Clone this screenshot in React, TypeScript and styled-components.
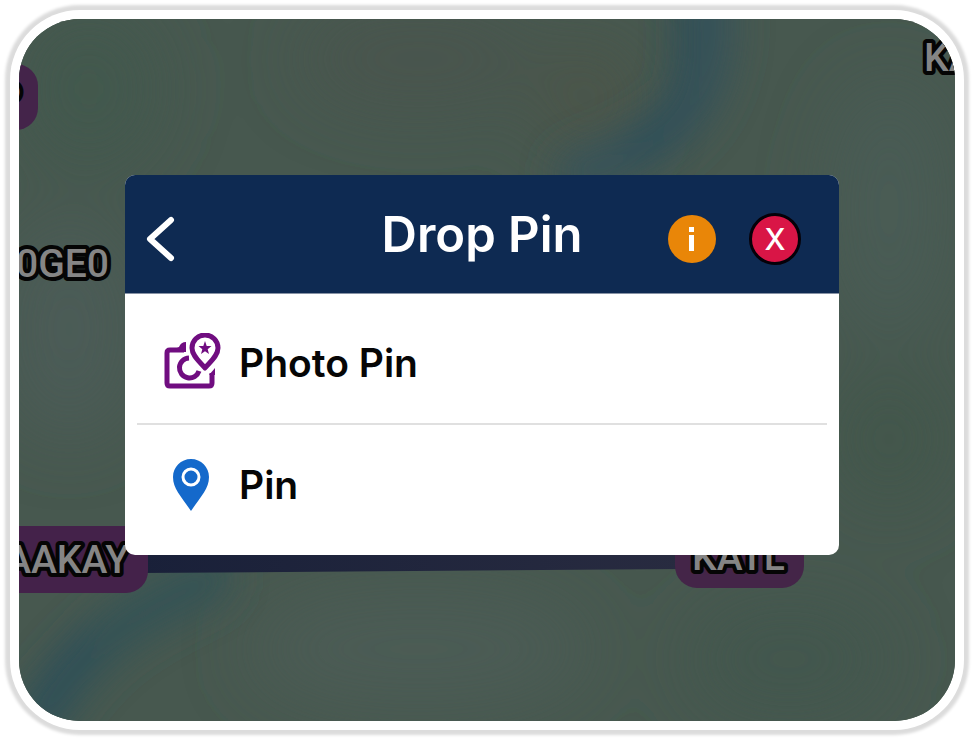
import React from "react";
import styled, { createGlobalStyle } from "styled-components";

const GlobalStyle = createGlobalStyle`
  *, *::before, *::after { box-sizing: border-box; }
  body { margin: 0; background: #ffffff; font-family: Inter, "Open Sans", sans-serif; }
`;

const Page = styled.div`
  display: flex;
  min-height: 100vh;
  padding: 10px;
`;

const Frame = styled.main`
  flex: 1;
  display: flex;
  padding: 9px;
  border-radius: 70px;
  background: #ffffff;
  box-shadow: 0 0 3px 5px #dcdcdc;
`;

const MapArea = styled.div`
  position: relative;
  flex: 1;
  display: flex;
  align-items: flex-start;
  padding: 156px 116px 165px 106px;
  border-radius: 61px;
  background: #47584f;
  overflow: hidden;
`;

const Terrain = styled.svg`
  position: absolute;
  inset: 0;
  width: 100%;
  height: 100%;
`;

const MapLabel = styled.text`
  font: 500 39px Roboto, sans-serif;
  fill: #858585;
  stroke: #050505;
  stroke-width: 8px;
  stroke-linejoin: round;
  paint-order: stroke fill;
`;

const Dialog = styled.section`
  position: relative;
  flex: 1;
  min-width: 0;
  border-radius: 10px;
  background: #ffffff;
  overflow: hidden;
`;

const Header = styled.header`
  display: grid;
  grid-template-columns: 1fr auto 1fr;
  align-items: center;
  height: 119px;
  padding: 10px 38px 0 20px;
  background: #0e2a52;
  border-bottom: 1px solid #8792a5;
`;

const Title = styled.h1`
  margin: 0 0 8px 18px;
  font-size: 49px;
  font-weight: 600;
  line-height: 56px;
  color: #ffffff;
`;

const IconButton = styled.button`
  display: flex;
  padding: 0;
  border: 0;
  background: none;
  cursor: pointer;
`;

const Actions = styled.div`
  display: flex;
  align-items: center;
  justify-content: flex-end;
  gap: 33px;
`;

const RoundButton = styled(IconButton)<{ $fill: string; $outlined?: boolean }>`
  align-items: center;
  justify-content: center;
  width: ${(p) => (p.$outlined ? 52 : 48)}px;
  height: ${(p) => (p.$outlined ? 52 : 48)}px;
  border: ${(p) => (p.$outlined ? "3px solid #050008" : "0")};
  border-radius: 50%;
  background: ${(p) => p.$fill};
  color: #ffffff;
  font: 500 30px/32px Inter, sans-serif;
`;

const List = styled.ul`
  margin: 0;
  padding: 9px 12px 10px;
  list-style: none;
`;

const Item = styled.li`
  & + & { border-top: 2px solid #e0e0e0; }
`;

const Option = styled.button`
  display: grid;
  grid-template-columns: 60px 1fr;
  align-items: center;
  column-gap: 18px;
  width: 100%;
  height: 120px;
  padding: 0 24px;
  border: 0;
  background: none;
  color: #060606;
  font: 600 39px/48px Inter, sans-serif;
  text-align: left;
  cursor: pointer;

  & > svg { justify-self: center; }
`;

const BackIcon = () => (
  <svg width="32" height="48" viewBox="0 0 32 48" fill="none" stroke="#fff" strokeWidth="6" strokeLinecap="round" strokeLinejoin="round" aria-hidden="true">
    <path d="M26 5 L5 24 L26 43" />
  </svg>
);

const InfoIcon = () => (
  <svg width="48" height="48" viewBox="0 0 48 48" fill="#fff" aria-hidden="true">
    <rect x="21" y="12" width="5" height="5" />
    <rect x="21" y="20" width="5" height="16" />
  </svg>
);

const PhotoPinIcon = () => (
  <svg width="60" height="60" viewBox="0 0 60 60" fill="none" stroke="#700d80" strokeWidth="4" strokeLinejoin="round" aria-hidden="true">
    <path d="M23 17 H9 Q6 17 6 20 V50 Q6 53 9 53 H48 Q51 53 51 50 V40" strokeWidth="5" />
    <path d="M14 16 L18 14 Q20 9 25 9 V19 H14 Z" fill="#700d80" stroke="none" />
    <path d="M48 42 L54 35 V42 Z" fill="#700d80" stroke="none" />
    <path d="M28 25 A10 10 0 1 0 38 38" strokeWidth="5" />
    <path d="M44 35 C39 29 31 23 31 15 A13 13 0 0 1 57 15 C57 23 49 29 44 35 Z" strokeWidth="5" />
    <path d="M44 8 L45.700 12.900 L50.500 13 L46.700 16.200 L48 21 L44 18.200 L40 21 L41.300 16.200 L37.500 13 L42.300 12.900 Z" fill="#700d80" stroke="none" />
  </svg>
);

const PinIcon = () => (
  <svg width="36" height="54" viewBox="0 0 36 54" aria-hidden="true">
    <path d="M18 1 C8 1 0 9 0 19 C0 31 8 38 18 53 C28 38 36 31 36 19 C36 9 28 1 18 1 Z" fill="#1469cb" />
    <circle cx="18" cy="19" r="8" fill="none" stroke="#fff" strokeWidth="3" />
  </svg>
);

const MapDrawing = () => (
  <Terrain viewBox="0 0 936 702" preserveAspectRatio="xMinYMin slice">
    <defs>
      <filter id="soft" x="-50%" y="-50%" width="200%" height="200%">
        <feGaussianBlur stdDeviation="18" />
      </filter>
      <filter id="wide" x="-50%" y="-50%" width="200%" height="200%">
        <feGaussianBlur stdDeviation="35" />
      </filter>
      <linearGradient id="route" x1="0" x2="1">
        <stop offset="0" stopColor="#192039" />
        <stop offset="1" stopColor="#282b40" />
      </linearGradient>
    </defs>
    <rect width="936" height="702" fill="#47584f" />
    <g filter="url(#wide)">
      <ellipse cx="70" cy="70" rx="70" ry="80" fill="#43584e" />
      <ellipse cx="400" cy="40" rx="120" ry="50" fill="#48554d" />
      <ellipse cx="50" cy="310" rx="70" ry="110" fill="#4b5c56" />
      <ellipse cx="570" cy="80" rx="50" ry="60" fill="#4b5449" />
      <ellipse cx="870" cy="190" rx="60" ry="130" fill="#4a5b55" />
      <ellipse cx="870" cy="420" rx="60" ry="70" fill="#42564b" />
      <ellipse cx="400" cy="630" rx="170" ry="60" fill="#4b5b55" />
      <ellipse cx="770" cy="640" rx="100" ry="60" fill="#43574d" />
    </g>
    <g filter="url(#soft)" fill="none" strokeLinecap="round">
      <path d="M692 -20 C700 70 670 120 560 155" stroke="#375358" strokeWidth="48" />
      <path d="M664 -20 C674 80 650 110 610 135" stroke="#204858" strokeWidth="14" />
      <path d="M190 560 C110 600 70 620 20 700" stroke="#355355" strokeWidth="48" />
      <path d="M70 620 C50 630 40 650 25 700" stroke="#284c5a" strokeWidth="18" />
    </g>
    <path d="M120 530 H665 V550 L120 554 Z" fill="url(#route)" />
    <rect x="-80" y="45" width="99" height="66" rx="22" fill="#44244a" />
    <rect x="-80" y="507" width="209" height="67" rx="22" fill="#44224a" />
    <rect x="656" y="500" width="129" height="69" rx="22" fill="#442548" />
    <MapLabel x="2" y="92" textAnchor="end">P</MapLabel>
    <MapLabel x="905" y="52">KA</MapLabel>
    <MapLabel x="90" y="258" textAnchor="end">0GE0</MapLabel>
    <MapLabel x="110" y="554" textAnchor="end">AAKAY</MapLabel>
    <MapLabel x="673" y="551">KATL</MapLabel>
  </Terrain>
);

export default function App() {
  return (
    <>
      <GlobalStyle />
      <Page>
        <Frame>
          <MapArea>
            <MapDrawing />
            <Dialog role="dialog" aria-labelledby="dialog-title">
              <Header>
                <IconButton type="button" aria-label="Back"><BackIcon /></IconButton>
                <Title id="dialog-title">Drop Pin</Title>
                <Actions>
                  <RoundButton type="button" aria-label="Information" $fill="#e98608"><InfoIcon /></RoundButton>
                  <RoundButton type="button" aria-label="Close" $fill="#d91546" $outlined>X</RoundButton>
                </Actions>
              </Header>
              <List>
                <Item><Option type="button"><PhotoPinIcon />Photo Pin</Option></Item>
                <Item><Option type="button"><PinIcon />Pin</Option></Item>
              </List>
            </Dialog>
          </MapArea>
        </Frame>
      </Page>
    </>
  );
}
